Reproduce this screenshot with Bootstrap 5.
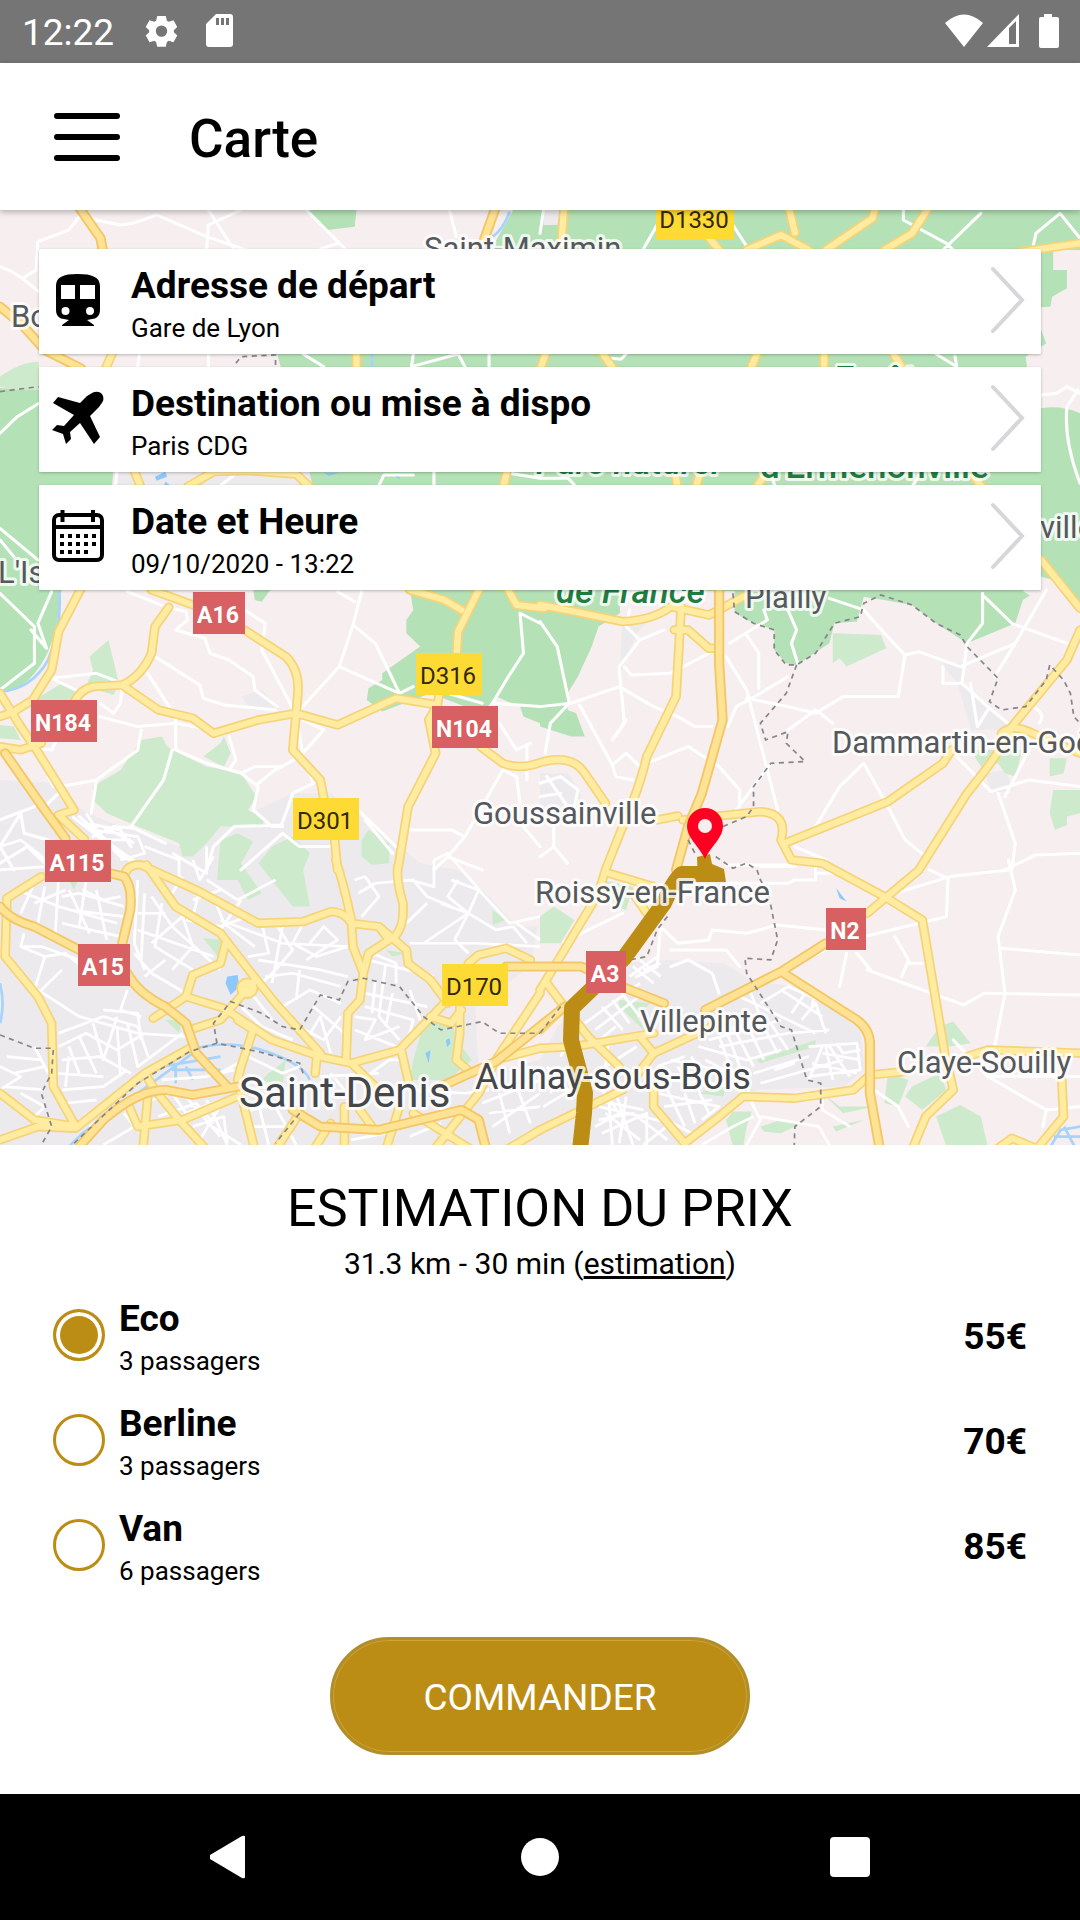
<!DOCTYPE html>
<html lang="fr">
<head>
<meta charset="utf-8">
<meta name="viewport" content="width=device-width, initial-scale=1">
<title>Carte</title>
<link href="https://cdn.jsdelivr.net/npm/bootstrap@5.3.0/dist/css/bootstrap.min.css" rel="stylesheet">
<style>
:root{--gold:#bc8d15}
body{font-family:Roboto,"Liberation Sans",sans-serif;color:#000;background:#fff}
.status-bar{height:63px;background:#757575;color:#fff;font-size:37px;line-height:1;padding:2px 20px 0 22px}
.app-bar{height:147px;background:#fff;padding:0 54px;gap:69px;z-index:2;box-shadow:0 2px 6px rgba(0,0,0,.28)}
.app-bar h1{font-size:53px;font-weight:500;line-height:60px}
.map-area{min-height:600px;padding:39px;overflow:hidden}
.map-canvas{position:absolute;inset:0;width:100%;height:100%}
.trip-list{gap:13px}
.trip-card{background:#fff;border:0;border-radius:1px;box-shadow:0 1px 3px rgba(0,0,0,.25);padding:13px 15px 8px 13px;gap:26px;color:#000}
.trip-card .lead-icon{width:53px;height:54px}
.label-strong{font-size:37px;line-height:48px;font-weight:700}
.label-small{font-size:26px;line-height:36px}
.panel{padding:32px 53px 39px}
.panel h2{font-size:52px;line-height:64px;font-weight:400}
.summary{font-size:30px;line-height:46px}
.options{gap:21px}
.option-row{gap:14px}
.option-row .form-check-input{width:52px;height:52px;border:3px solid var(--gold);background-color:#fff}
.option-row .form-check-input:checked{background-color:var(--gold);background-image:none;box-shadow:inset 0 0 0 4px #fff}
.order-btn{width:420px;max-width:100%;height:118px;padding-top:10px;font-size:37px;line-height:44px;color:#fff;background:var(--gold);border:3px solid #b28e2b;box-shadow:inset 0 0 0 1px #cfa338}
.order-btn:hover{background:#a97e10;color:#fff}
.nav-keys{height:126px;background:#000}
.nav-keys .btn{padding:0;border:0}
/* map */
.place{font-size:31px;fill:#55585c;stroke:#fff;stroke-opacity:.8;stroke-width:6;stroke-linejoin:round;paint-order:stroke}
.town{font-size:36px;fill:#43464a}
.city{font-size:42px;fill:#43464a}
.park{font-size:35px;font-weight:500;fill:#1f7d40}
.shield text{font-size:24px;text-anchor:middle}
.shield .red{fill:#d96062}
.shield .yel{fill:#fedb34}
.shield .redtxt text{fill:#fff;font-weight:700;font-size:23px}
.shield .yeltxt{fill:#33280a}
</style>
</head>
<body class="d-flex flex-column min-vh-100">
<div class="status-bar d-flex align-items-center">
  <span>12:22</span>
  <svg class="ms-4 mb-1" width="44" height="36" viewBox="0 0 44 36" fill="#fff" aria-hidden="true"><path fill-rule="evenodd" d="M17.500 2h9l1.200 5 2 1.200 4.900-1.500 4 7-3.600 3.400v2.200l3.600 3.400-4 7-4.900-1.500-2 1.200-1.200 5h-9l-1.200-5-2-1.200-4.900 1.500-4-7 3.600-3.400v-2.200l-3.600-3.400 4-7 4.900 1.500 2-1.200zM22 12a6 6 0 100 12 6 6 0 000-12z" transform="translate(2.600 1) scale(.95)"/></svg>
  <svg class="ms-4 mb-1" width="28" height="36" viewBox="0 0 28 36" fill="#fff" aria-hidden="true"><path fill-rule="evenodd" d="M10 1h14q3 0 3 3v27q0 3-3 3H3q-3 0-3-3V11zM10 5v7h3V5zM15 5v7h3V5zM20 5v7h3V5z"/></svg>
  <div class="ms-auto mb-1 d-flex align-items-center">
    <svg width="116" height="36" viewBox="0 0 116 36" fill="#fff" aria-hidden="true"><path d="M1 10Q20-7 39 10L20 34z"/><path fill-rule="evenodd" d="M43 34L75 1v33zM65 15v16h7V8z"/><path d="M100 1h8v3h5q2 0 2 2v27q0 2-2 2H97q-2 0-2-2V6q0-2 2-2h3z"/></svg>
  </div>
</div>

<header class="app-bar d-flex align-items-center position-relative">
  <button class="btn p-0 border-0 d-flex" type="button" aria-label="Menu">
    <svg width="66" height="50" viewBox="0 0 66 50" stroke="#000" stroke-width="6" stroke-linecap="round"><path d="M3 4h60M3 25h60M3 46h60"/></svg>
  </button>
  <h1 class="m-0 pt-1">Carte</h1>
</header>

<main class="flex-grow-1 d-flex flex-column">
<section class="map-area position-relative flex-grow-1">
<svg class="map-canvas" viewBox="0 210 1080 935" preserveAspectRatio="xMidYMin slice" role="img" aria-label="Plan de l'itinéraire">
<defs>
<g id="motorways" transform="translate(0 200) scale(.3444 .3333)" fill="none" stroke-linejoin="round" stroke-linecap="round">
  <path d="M228 20L292 115L300 160M0 320L60 370L130 450L235 505M1440 20L1395 150"/>
  <path d="M15 1660L130 1830L190 1915M0 2120Q30 2160 100 2180L230 2250M370 2320Q400 2380 480 2420L540 2470L570 2560L660 2660M230 2840L300 2760Q400 2670 480 2670L560 2685L690 2660M850 2730L930 2780L1100 2790L1340 2730L1390 2760L1412 2850M320 2020L360 2030Q385 2060 378 2130L355 2230"/>
  <path d="M1470 2300H1688L1818 2365L1928 2410M2088 1160V1390L2098 1560L2038 1780L1998 1880L1963 2010M2048 2430L2268 2315L2398 2230M2268 2315L2488 2460Q2528 2490 2526 2540V2680L2555 2850M1280 2660L1440 2585L1640 2420"/>
</g>
<g id="highways" transform="translate(0 200) scale(.3444 .3333)" fill="none" stroke-linejoin="round" stroke-linecap="round">
  <path d="M330 450L305 510M1035 450V510M385 800L412 870M545 860L620 815L720 812L860 822L900 862M1475 800L1460 870"/>
  <g transform="translate(1568 0)"><path d="M70 20L60 160M722 20L740 98M480 100L520 150M600 150L700 105L780 150M830 150L965 55L975 20M1130 20L1080 100L1000 150M1400 155L1568 130M20 450L0 510M175 450L215 510M635 450L610 510M825 450V510M1020 450L1055 510M390 800L400 870M470 800L450 870M655 820L630 860M1260 830L1290 870M1455 1080L1568 1225M1568 1290L1530 1380L1370 1580Q1350 1640 1240 1780L1100 2010L950 2140"/></g>
  <g transform="translate(0 1140)"><path d="M238 20L170 155L150 270L95 360L40 395L0 410M0 340L60 440L100 500L215 690L170 705L245 778M490 82L450 140L440 220Q410 290 355 315L270 320Q230 330 215 370M355 315L460 390L560 415L620 460L750 420L860 400L980 435L1150 355L1270 375M440 30L560 75M710 150L830 230Q870 270 865 340L860 400L850 510L930 600L945 680M970 760L980 870M1395 20L1330 155L1325 240M1275 345L1270 375L1245 420L1265 520L1185 680L1155 870M1190 30L1290 60L1340 90M1470 20L1500 75L1580 85M1395 500L1460 550Q1510 570 1568 548Q1660 520 1698 580L1758 670M0 500L60 510L120 490"/></g>
  <g transform="translate(1568 1140)"><path d="M0 75L100 95L240 125Q330 120 380 80L490 105L520 90L590 50M410 80L395 350L310 530Q290 620 240 740L190 870L170 940L30 1180L0 1230M390 150L430 150L490 205L520 205M340 720L400 708M415 720L640 695Q720 700 700 780L730 840L820 850L1000 950L1110 1020L1175 1420L1200 1530L1120 1610L1080 1710M710 790L1010 665L1170 550L1195 510M1340 460Q1370 430 1430 460L1568 520"/></g>
  <g transform="translate(0 1980)"><path d="M20 115L120 50M20 115L15 290L110 410L150 490L155 680L220 800M360 50Q370 10 410 15L570 90L750 190L880 185L960 155Q1000 155 1020 190L1100 200L1180 270L1185 310L1250 360L1300 430M425 15L510 140L640 220L730 340L800 430L930 580M655 250L640 310L560 345L540 410L445 475M540 410L650 445L790 540L930 590L1020 610L1160 570L1290 430M740 360L640 480L565 505M700 385a18 18 0 1 0 36 0a18 18 0 1 0-36 0M975 0Q1000 80 1020 180L1025 260L1055 340L1045 420L1010 460L1005 600M1155 20Q1150 60 1170 130Q1175 220 1130 240L1070 280L1055 340M1100 200L1130 240M690 480L735 510L700 620L690 660L740 870M920 590L915 640M1020 610L1110 700M1165 570L1185 660M1360 310L1390 285L1470 265L1540 300M1568 400L1440 600L1390 700L1260 870M1250 470L1310 490L1340 450M1335 440V520L1325 600L1370 640M1568 565L1440 600M0 700L100 780L220 800M0 840L110 800L220 805L420 640L550 565M375 740L400 800L530 780L690 710M420 640L450 690L520 780L600 870M430 700L415 870M800 870L870 760M1000 740V870M1160 740L1120 870M1200 760L1370 870M1568 810L1470 870M1045 750L1080 800M960 790L910 870"/></g>
  <g transform="translate(1568 1980)"><path d="M200 40L330 80M270 100L310 160M20 370L70 440L0 510M70 440L140 530L230 620M0 565L100 560L330 520M290 530L330 580L540 480M330 580L270 660M958 645L1060 635M958 645L910 690L740 715L590 710L520 770L420 850L330 740V690M0 810L240 690M1240 590L1300 570L1580 580M1515 660L1520 770L1440 870M1330 865L1370 835L1440 865"/></g>
</g>
</defs>
<rect y="200" width="1080" height="950" fill="#f6eeef"/>
<g transform="translate(0 200) scale(.3444 .3333)">
  <!-- built-up areas -->
  <g fill="#edeaee">
    <path d="M0 1740L170 1750L220 1820L300 1860L520 1940L640 1880L850 1780L960 1780L1150 1930L1220 1990L1330 2010L1420 2090L1500 2180H1560L1540 2300L1380 2420L1390 2620L1568 2580L1620 2480L1800 2290L1940 2280L2100 2290L2180 2340L2370 2370L2440 2420L2500 2490L2510 2610L2450 2660L2200 2670L2120 2720L1990 2840H0z"/>
    <path d="M330 800H900V870H330zM1578 30H1628L1618 75H1578zM700 1490L760 1470L810 1530L730 1530zM1810 1180H1950L1850 1300L1800 1420zM2730 1390H2800V1460L2950 1590H2820L2780 1450zM1568 1720L1650 1720L1690 1790L1640 1860H1568zM2860 1720L2920 1710L2940 1770L2880 1780z"/>
  </g>
  <!-- woods -->
  <g fill="#b4e2b6">
    <path d="M0 565L113 568L330 800L325 860L175 1180L170 1240Q150 1390 60 1460L0 1480zM1490 30H1568V150H1425zM805 462H1600V870H910L895 800zM1190 1170H1568V1570L1520 1550L1510 1520L1440 1490L1400 1540L1250 1480L1110 1535L1065 1500L1070 1465L1110 1440V1420L1220 1340L1180 1300V1260L1200 1230z"/>
    <path d="M890 30H1035L1030 80L950 90zM735 1170H785L760 1205L740 1200z"/>
    <path d="M1568 30H3136V150H3058V210H3098V265L3055 290L3050 320L3023 322V390L3038 430L3023 440L2978 470L2982 500L3023 540V625Q3080 615 3136 640V1230L3060 1140L2970 1200L2948 1270L2808 1330L2718 1270L2648 1215L2568 1200L2508 1190L2488 1265L2423 1270L2408 1330L2313 1395L2283 1390L2248 1350V1290L2168 1260L2133 1235V1173H1568z"/>
    <path d="M1568 1170H1810L1800 1240L1738 1280L1718 1340L1678 1430L1648 1480V1530L1673 1540L1698 1610H1658L1568 1580z"/>
  </g>
  <path fill="#f6eeef" d="M1800 1180H2085V1260H1800zM2970 1173L3023 1130L3060 1140L3010 1200z"/>
  <path fill="#eeebef" d="M1578 30H1628L1618 75H1578z"/>
  <g fill="#cdebcc">
    <path d="M0 530Q60 485 113 485V570L50 570L0 560z"/>
    <path d="M410 1620L470 1610L485 1640L520 1660L600 1700L700 1720L745 1790L720 1830L770 1860L760 1875L700 1880H640L600 1930L560 1970L530 1970L520 1930L400 1880L310 1840L270 1800V1760L350 1710z"/>
    <path d="M315 1320L345 1450L330 1485L250 1460L270 1410L260 1370zM100 1500L180 1450L230 1480L190 1540H100zM650 1610L670 1660L650 1700L590 1670L640 1630zM640 1920L690 1900L735 1925L700 1990L760 2080L720 2100L690 2040H630zM790 1940L850 1910L900 1960L880 2010L900 2120L850 2120L750 1990zM1050 1920L1070 1890L1130 1930V1990L1080 1995L1050 1970zM0 1575L40 1580L60 1620L0 1615z"/>
    <path d="M590 2215L650 2220L640 2280zM1230 2470L1310 2470L1340 2540L1370 2580L1300 2640H1190L1200 2580zM480 2460H530L520 2500zM780 2620L830 2580L820 2660L760 2640zM1430 2130L1470 2160L1430 2175zM200 2040L230 2030L215 2070zM1120 2250L1180 2260L1140 2270z"/>
    <path d="M2418 1300L2558 1305L2573 1345L2458 1400L2438 1375L2418 1390zM2818 1650H2968L2948 1730L2918 1720L2898 1690L2848 1700zM3048 1675H3098L3088 1720L3048 1730zM3058 1770H3136V1840L3098 1850V1875L3063 1890L3048 1840z"/>
    <path d="M1568 2150L1608 2120L1668 2160L1628 2230L1568 2230zM1798 2400L1888 2410L1848 2450L1888 2510L1798 2420zM2198 2580L2368 2520V2540L2208 2590zM2688 2540L2728 2480L2768 2465L2818 2530L2758 2540zM2578 2620L2638 2640L2608 2720L2568 2710zM2648 2660L2728 2620L2748 2670L2678 2730L2628 2690zM2718 2750L2788 2715L2848 2750L2868 2840H2748zM2108 2760L2128 2735H2183L2168 2780L2158 2840H2128zM2208 2780L2268 2760L2328 2770L2268 2800L2218 2795zM2388 2680L2438 2720H2538L2448 2740zM2418 2780L2508 2760L2428 2795zM1748 2040L1838 2060L1818 2130L1788 2120zM2020 2680L2110 2660L2100 2690z"/>
  </g>
  <!-- water -->
  <g fill="none" stroke="#a8d3fa" stroke-width="8">
    <path d="M172 1175Q180 1280 140 1380Q90 1470 0 1475M1080 462V500M1480 35Q1460 90 1430 110M570 2545Q660 2520 760 2550Q880 2590 900 2640M200 2840L240 2800L560 2560M500 2610H640M510 2600V2650M540 2600L560 2640M470 2600L640 2570M0 2350Q15 2410 0 2470M3050 2840L3080 2790L3136 2780M3060 2810H3136M3090 2780L3120 2840"/>
  </g>
  <path fill="#8ec8fb" d="M660 2330L690 2325L695 2360L670 2385L655 2350zM2428 2065L2458 2105L2438 2095zM450 830l30-15 5 15-30 12zM480 845l20 15h-25zM1140 825l20 0 0 12zM940 818l45 0-30 10zM1295 2520l10-5 3 15-10 12zM1235 2560l15-10-5 40z"/>
  <!-- minor roads -->
  <g fill="none" stroke="#fff" stroke-width="9" stroke-linejoin="round" stroke-linecap="round">
    <path d="M0 200L35 215L65 235L105 210L110 125L200 90L230 50L350 75L385 70L455 45L600 110L800 180M600 150L605 75L700 30M605 30L680 150M890 30L1000 145M930 147L980 130M1305 30L1325 110M65 235L113 275M405 462L400 500M605 462V500M0 700L50 650L113 610M880 462L940 500M1200 462L1195 500L1330 462L1350 500M1420 462V500M1100 857L1115 825L1200 825M1260 816V857M1480 820L1568 835M640 857L680 825M340 810L335 860M0 985L110 1080M0 1020L40 1070"/>
    <path d="M1568 100L1578 30M1908 75L1868 147M2128 75L2173 147M2623 30V60L2748 130L2768 150M2738 150L2848 40M2998 147L3008 100L3078 40L3136 115M3023 585L3068 580L3098 560L3136 580M3130 570L3098 620Q3088 720 3136 850M1773 475L1803 478L1818 462M2718 462L2778 500L2773 470M1568 835H1650L1670 857M2240 830L2250 857M2670 825L2650 857"/>
    <g transform="translate(0 1140)"><path d="M370 35L480 80L540 95L545 120L510 150L595 175L610 220L665 240L735 290L740 330L805 380M450 230L580 315L590 355L650 375L800 390M425 275L510 410V510L600 550L700 580L750 620L735 690L790 740H820M710 90L770 130L760 210L850 385M1050 35L1025 135L985 260L870 390M1025 135L1090 190L1160 340L1200 320M980 35L1030 65M985 260L1160 340M1510 100L1520 220L1470 300L1430 370L1568 380M1300 340L1400 370M1510 100L1568 130M150 295L280 280L355 310L350 370L330 400L290 370M150 295L240 340M290 410L400 440L510 430L620 450M410 450L400 510L280 600L265 700M500 510L475 600L380 740L480 790M665 470L685 540L665 570M700 580L740 560L810 560L750 610M940 450L870 530L800 570M860 410L880 530L910 610L850 640L830 700L815 740M1040 690L1150 800M1060 720L1140 820M1180 750H1310L1350 770L1460 570L1500 590L1510 670M1450 430L1500 510L1540 490M1530 500V600M1350 770L1300 830L1260 870M1300 830L1400 870M0 40L20 60L100 140V250L0 330M150 35L110 130L135 205L90 150M600 870L620 800L680 740L820 735M700 870L820 760L870 800H960M880 420L940 450M140 590L155 620L200 615L280 600M130 680L170 640M0 720L100 680M0 800L60 700L70 760L140 780M1520 740L1568 800M165 480L150 510L110 505M0 850L80 800L130 850M40 870L0 800M230 710L330 800L400 850M250 730L350 750L380 800M270 770L330 740L390 745"/></g>
    <g transform="translate(1568 1140)"><path d="M0 125L50 200L85 370L30 430L15 520M0 380L90 370L230 320L330 380L400 410L450 440H500M260 90L250 140L290 180L230 260L235 330M115 375L210 555L250 520L290 560M235 320L245 430L210 480L250 420M290 180L360 150M245 260L265 285L380 280L490 220M210 555L220 590L270 600M550 190L660 120L650 90M540 230L600 330L610 370L690 690M600 165L635 220V325M545 440L570 380L640 340L720 290M600 355L720 380L800 400L880 350L1040 350L1060 225L1000 160L940 90L840 55M720 90L745 150L730 190L748 250M720 450L800 390L850 430M310 550L430 500L520 560L580 630V680M570 690L670 550M1060 225L1100 215L1220 260L1380 190L1470 30M1285 40V130L1240 190L1225 310L1300 380L1370 440M1290 50L1370 130L1530 190M1380 190L1320 290M1170 260V310H1220M1300 390L1270 440L1250 310M800 740L870 620L940 550L1010 680L1060 780L1120 830M1210 530L1310 635L1420 600L1568 620M1330 640L1380 790L1370 870M1420 510L1350 650M1350 870L1440 825L1568 820M740 800L830 840M540 855H740M1430 380Q1470 400 1450 430M0 610L60 590L110 630L100 680M20 590L80 680M0 650L60 640M40 730V800L0 830M40 800L80 850"/></g>
    <g transform="translate(1568 1980)"><path d="M350 200L400 250L490 240L500 210L600 220L690 195L830 210M380 270L540 270L580 320M70 245L240 160M540 70H720L740 60H800V20M640 20H740M800 40H860M715 320L900 240L1180 170L1185 55L1130 30M1000 110L1190 50L1360 30M1360 0L1380 90L1330 230L1350 400L1320 560M1340 265L1568 285M950 330L1230 435L1290 400L1568 405M920 280L960 330M1030 230L1070 300L1050 350M890 280L870 380M1070 310H1110M970 690L1040 740L1070 800M1200 540L1300 650L1470 750L1568 740M1300 650H1568M1470 750L1460 800M350 200L340 320L280 350M380 320L430 300L500 340L520 400"/></g>
  </g>
  <!-- dense street mesh -->
  <g fill="none" stroke="#fff" stroke-width="8" stroke-linejoin="round">
    <g transform="translate(0 1980)"><path d="M0 -40L60 -60L110 -20L130 0M0 30L130 20M230 -130L360 0M250 -140L300 -60L380 -60M270 -90L400 -70L420 -20L350 0M210 -130L400 20M300 -100L390 -50M500 -20L600 40L600 -40M560 0L580 60L620 -10M420 -40L520 0V60L640 120M500 100L530 50"/>
    <path d="M50 90L170 140L340 190M100 70L60 160M130 80L110 190M170 60L160 230M200 90L260 220M240 90L300 120L350 110M180 110L230 100L360 140M100 130L190 90M180 190L350 230M200 150L360 170M250 60L230 200M280 90L310 240M70 220L60 260L130 290L190 280L250 330M130 290L100 390M60 260L120 260L230 300M120 390L180 330M110 390L230 470L400 520M370 390L350 450L410 470"/>
    <path d="M400 60L390 250L420 330M420 100L410 300M440 110L500 200L640 330M470 130L450 260L560 330M400 160H480M400 210L620 290M440 250L530 170L560 260L500 330M390 280L440 340L540 400M420 350L480 300M540 180L640 200L720 170M560 120L640 90M580 90L560 170M620 110L650 190L740 260M600 60L690 120L800 60M640 180L820 250L1010 260M700 120L640 210M760 190L780 280L720 290M800 190L850 270L800 330L760 370M820 200L790 370M880 190L850 250L920 290L1010 260M900 250L940 200L980 240L890 300M750 300L930 330L1010 350M770 350L850 340L990 380M860 420L870 330M820 440L900 390L990 430M730 400L790 480M700 440L760 500L850 540M910 440L1000 520M850 490L940 540L990 470M890 540L930 470L960 580"/>
    <path d="M1030 60L1060 50L1100 110L1050 170M1040 100L1090 70L1200 60L1240 110L1310 140M1190 60L1260 80V0M1240 130L1180 190M1310 60L1390 90L1360 160L1300 110L1330 60M1280 130L1360 160L1320 240M1360 160L1440 210L1490 200L1530 250M1360 160L1230 250M1390 90L1480 190L1568 170M1190 250L1380 250L1568 260M1260 0L1300 -20L1400 100M1320 240L1360 280M1500 190L1568 240"/>
    <path d="M1070 300L1260 350M1080 280L1150 310L1150 370M1090 360L1080 460M1120 310L1100 470L1160 540M1060 400L1240 440M1060 440L1200 480L1180 560M1030 470L1090 480L1060 540L1160 500M1030 510L1150 560M1140 400L1120 500M1190 390L1220 480"/>
    <path d="M170 520L300 470L400 500L430 590M170 560L250 520L340 570L420 520M180 600L290 590L380 640M160 640L300 650M200 560L230 640M230 530L280 640M270 490L300 600L340 470M340 500L350 650M370 490L400 620L530 520M400 520L540 530M300 450L400 460L410 540M180 690L300 680L370 630M190 730L280 720M200 590L190 680M40 640L130 620L100 560M10 680L130 690M20 590L120 600L140 640M60 700L130 740L90 780M0 620L60 650L0 690"/>
    <path d="M260 800L380 720M300 855L390 800L360 760M440 720L500 700L540 760L640 720M460 770L570 730L620 790M560 800L650 770L660 850M600 790L700 855M540 710L640 830M600 720L660 855M650 720L580 840M700 760L800 730L870 760M720 800L850 800M750 730L780 855M800 740L860 855M960 640L1000 690M580 600L640 640L690 610M720 590L820 640L870 620M620 630L690 700M470 660L600 650L680 630M930 650L1100 640M1050 660L1130 600L1180 600M1200 690L1350 700L1420 690M1280 740L1310 700M1020 840L1120 820M1190 830L1280 790M1420 760L1568 740M1430 800L1568 700M1450 700L1480 820M1500 680L1540 790M1400 730L1568 660"/></g>
    <g transform="translate(1568 1980)"><path d="M130 490L290 370M160 510L300 400M180 440L240 510M230 390L290 470M210 420L260 490M260 350L340 290M270 320L330 370M290 300L350 350M300 330L350 310"/>
    <path d="M560 400L800 520M600 370L640 470L560 510M640 430L720 380L830 430M700 390L820 470M730 460L770 400M760 480L800 430L830 520M800 380L790 440M490 540L700 480M520 560L720 520L840 510M560 500L620 620M600 490L650 600M640 480L690 580M670 490L720 570M460 560L600 600L700 570M480 600L590 660M520 530L560 640M540 510L580 620M620 640L780 590M640 670L880 600M680 630L740 610M780 560L920 550L930 630L780 650M820 560L780 660M830 560L850 660M840 560L900 650M820 580L930 600M790 610L920 640M860 550L880 580L930 570"/>
    <path d="M20 620L90 700M30 700L60 640M0 660L100 700M10 740L90 690M180 690L230 760L160 800M170 740L380 790L300 855M190 760L290 840M200 720L210 855M220 700L270 855M250 710L230 850M160 720L300 750M180 820L310 760L310 855M170 780L270 760L370 840M340 700L520 740L470 780M360 740L500 720M350 770L440 820M370 690L420 800M420 700L450 790M460 690L490 760M370 660L600 680L620 730M400 620L440 690M440 590L480 680M380 600L560 640M610 720L640 780L600 855M620 770L560 800L470 855M640 770L810 800L840 855M820 690V750L900 800M340 620L420 590M200 540L190 620L280 560M150 560L220 500M60 590L90 530"/></g>
  </g>
</g>
<use href="#highways" stroke="#f6d376" stroke-width="28"/>
<use href="#highways" stroke="#ffeca1" stroke-width="18"/>
<use href="#motorways" stroke="#f3c767" stroke-width="30"/>
<use href="#motorways" stroke="#ffe394" stroke-width="19"/>
<g transform="translate(0 200) scale(.3444 .3333)" fill="none" stroke="#86868a" stroke-width="5" stroke-dasharray="15 13">
  <path d="M0 575L50 568L113 560M685 490L700 470L800 465V495"/>
  <g transform="translate(1568 1140)"><path d="M560 40L565 95L620 130L680 150V210L715 255H745L800 220L855 130L930 110L940 70L990 45L1080 75L1150 130L1220 165L1240 200L1330 295L1305 365L1340 390L1410 380L1470 300L1480 255L1520 300L1540 340L1550 410L1568 430M745 255L715 340L640 430L655 480L720 455L715 490L770 545L670 550L620 620V680L600 710L530 740M430 780L450 820M510 830L560 865L600 850L630 870L640 900L665 950L690 1080L670 1140L595 1135L600 1180L700 1340L730 1350L775 1500L815 1510V1580L740 1640L738 1700M370 1010L340 1050L310 1130L260 1140M60 1280L0 1360"/></g>
  <g transform="translate(0 1980)"><path d="M0 525L100 565L155 565L150 640L120 700L150 800L120 855M215 850L400 670L550 575L630 550L750 575L870 610L880 640M630 550L620 490L670 425L760 460L820 500L870 510L930 405L985 420L1010 365L1055 355L1160 380L1230 470L1280 510L1400 485L1450 520L1568 520M870 760L800 850"/></g>
</g>
<!-- itinerary -->
<path d="M700 874H682Q674 880 664 903L624 958L572 1008L571 1040L585 1093L584 1113L580 1150" fill="none" stroke="#bc8d15" stroke-width="16" stroke-linejoin="round"/>
<path d="M697 857L710 854L712 864L724 869L726 882H698z" fill="#bc8d15"/>
<g class="place">
  <text x="424" y="259">Saint-Maximin</text><text x="11" y="327">Bo</text><text x="-2" y="583">L'Is</text>
  <text x="1040" y="538">ville</text><text x="745" y="608">Plailly</text>
  <text x="832" y="753">Dammartin-en-Goële</text><text x="473" y="824">Goussainville</text>
  <text x="535" y="903">Roissy-en-France</text><text x="640" y="1032">Villepinte</text><text x="897" y="1073">Claye-Souilly</text>
  <text class="town" x="475" y="1089">Aulnay-sous-Bois</text><text class="city" x="239" y="1107">Saint-Denis</text>
  <g class="park"><text x="835" y="391">Forêt</text><text x="536" y="474" font-style="italic">Parc naturel</text><text x="760" y="478">d'Ermenonville</text><text x="556" y="603" font-style="italic">de France</text></g>
</g>
<g class="shield">
  <g class="red"><rect x="193" y="592" width="52" height="42"/><rect x="31" y="700" width="66" height="42"/><rect x="45" y="840" width="66" height="42"/><rect x="78" y="944" width="52" height="42"/><rect x="432" y="706" width="66" height="42"/><rect x="586" y="951" width="40" height="42"/><rect x="826" y="908" width="40" height="42"/></g>
  <g class="yel"><rect x="656" y="197" width="78" height="42"/><rect x="416" y="653" width="66" height="42"/><rect x="293" y="798" width="66" height="42"/><rect x="442" y="964" width="66" height="42"/></g>
  <g class="redtxt"><text x="218" y="623">A16</text><text x="63" y="731">N184</text><text x="77" y="871">A115</text><text x="103" y="975">A15</text><text x="464" y="737">N104</text><text x="605" y="982">A3</text><text x="845" y="939">N2</text></g>
  <g class="yeltxt"><text x="694" y="228">D1330</text><text x="448" y="684">D316</text><text x="325" y="829">D301</text><text x="474" y="995">D170</text></g>
</g>
<path fill="#ff0022" d="M705 808a18 18 0 0 0-18 18c0 12 12 20 18 33 6-13 18-21 18-33a18 18 0 0 0-18-18z"/><circle cx="705" cy="826" r="7" fill="#f6eeef"/>
</svg>

<div class="trip-list d-flex flex-column position-relative">
  <button type="button" class="trip-card d-flex align-items-center text-start w-100">
    <svg class="lead-icon flex-shrink-0 mb-2" viewBox="0 0 53 54" aria-hidden="true"><path fill-rule="evenodd" d="M25.500 1C11 1 4 4 4 13v24c0 6 4 9 8 9l5 1-7 5v1h32v-1l-7-5 5-1c4 0 8-3 8-9V13C48 4 40 1 25.500 1zM9 12h14v14H9zM28 12h15v14H28zM13.500 34a4 4 0 110 8 4 4 0 010-8zM38 34a4 4 0 110 8 4 4 0 010-8z"/></svg>
    <span class="flex-grow-1"><span class="label-strong d-block">Adresse de départ</span><span class="label-small d-block">Gare de Lyon</span></span>
    <svg class="mb-2" width="36" height="68" viewBox="0 0 36 68" fill="none" stroke="#d7d7da" stroke-width="4" stroke-linecap="round" aria-hidden="true"><path d="M3 3l29 31L3 65"/></svg>
  </button>
  <button type="button" class="trip-card d-flex align-items-center text-start w-100">
    <svg class="lead-icon flex-shrink-0 mb-2" viewBox="0 0 53 54" aria-hidden="true"><path d="M35 5L41 1.500Q45 0 49 2Q53 6 50.500 11L47 16L38 25L48 46L42 53L28 32L18 41L19 48L14 53L11 43L0 39L5 34L12 35L22 24L1 12L6 6L28 12z"/></svg>
    <span class="flex-grow-1"><span class="label-strong d-block">Destination ou mise à dispo</span><span class="label-small d-block">Paris CDG</span></span>
    <svg class="mb-2" width="36" height="68" viewBox="0 0 36 68" fill="none" stroke="#d7d7da" stroke-width="4" stroke-linecap="round" aria-hidden="true"><path d="M3 3l29 31L3 65"/></svg>
  </button>
  <button type="button" class="trip-card d-flex align-items-center text-start w-100">
    <svg class="lead-icon flex-shrink-0 mb-2" viewBox="0 0 53 54" aria-hidden="true"><rect x="2" y="6" width="48" height="45" rx="5" fill="none" stroke="#000" stroke-width="4"/><path d="M2 18h48" stroke="#000" stroke-width="4"/><path d="M10.500 1v12M41 1v12" stroke="#000" stroke-width="4"/><path d="M8 27h38M8 35h38" stroke="#000" stroke-width="4" stroke-dasharray="4 4"/><path d="M8 43h30" stroke="#000" stroke-width="4" stroke-dasharray="4 4"/></svg>
    <span class="flex-grow-1"><span class="label-strong d-block">Date et Heure</span><span class="label-small d-block">09/10/2020 - 13:22</span></span>
    <svg class="mb-2" width="36" height="68" viewBox="0 0 36 68" fill="none" stroke="#d7d7da" stroke-width="4" stroke-linecap="round" aria-hidden="true"><path d="M3 3l29 31L3 65"/></svg>
  </button>
</div>
</section>

<section class="panel text-center">
  <h2 class="m-0">ESTIMATION DU PRIX</h2>
  <p class="summary m-0">31.3 km - 30 min (<a href="#" class="text-black">estimation</a>)</p>
  <div class="options d-flex flex-column text-start mt-2">
    <div class="option-row d-flex align-items-center">
      <input class="form-check-input mt-0 mb-1 flex-shrink-0" type="radio" name="offer" id="eco" checked>
      <label class="flex-grow-1 d-flex align-items-center justify-content-between" for="eco"><span><span class="label-strong d-block">Eco</span><span class="label-small d-block">3 passagers</span></span><span class="label-strong">55€</span></label>
    </div>
    <div class="option-row d-flex align-items-center">
      <input class="form-check-input mt-0 mb-1 flex-shrink-0" type="radio" name="offer" id="berline">
      <label class="flex-grow-1 d-flex align-items-center justify-content-between" for="berline"><span><span class="label-strong d-block">Berline</span><span class="label-small d-block">3 passagers</span></span><span class="label-strong">70€</span></label>
    </div>
    <div class="option-row d-flex align-items-center">
      <input class="form-check-input mt-0 mb-1 flex-shrink-0" type="radio" name="offer" id="van">
      <label class="flex-grow-1 d-flex align-items-center justify-content-between" for="van"><span><span class="label-strong d-block">Van</span><span class="label-small d-block">6 passagers</span></span><span class="label-strong">85€</span></label>
    </div>
  </div>
  <button type="button" class="btn order-btn rounded-pill mt-5">COMMANDER</button>
</section>
</main>

<nav class="nav-keys d-flex align-items-center" aria-label="Navigation système">
  <div class="row g-0 w-100 justify-content-center text-center">
    <div class="col"></div>
    <div class="col-auto"><button class="btn" type="button" aria-label="Retour"><svg width="40" height="44" viewBox="0 0 40 44" fill="#fff"><path d="M0 20L32 1q3-1 3 1v40q0 2-3 1L0 24q-2-2 0-4z"/></svg></button></div>
    <div class="col-3"></div>
    <div class="col-auto"><button class="btn" type="button" aria-label="Accueil"><svg width="40" height="44" viewBox="0 0 40 44" fill="#fff"><circle cx="20" cy="22" r="19"/></svg></button></div>
    <div class="col-3"></div>
    <div class="col-auto"><button class="btn" type="button" aria-label="Applications"><svg width="40" height="44" viewBox="0 0 40 44" fill="#fff"><rect y="2" width="40" height="40" rx="4"/></svg></button></div>
    <div class="col"></div>
  </div>
</nav>
<script src="https://cdn.jsdelivr.net/npm/bootstrap@5.3.0/dist/js/bootstrap.bundle.min.js"></script>
</body>
</html>
